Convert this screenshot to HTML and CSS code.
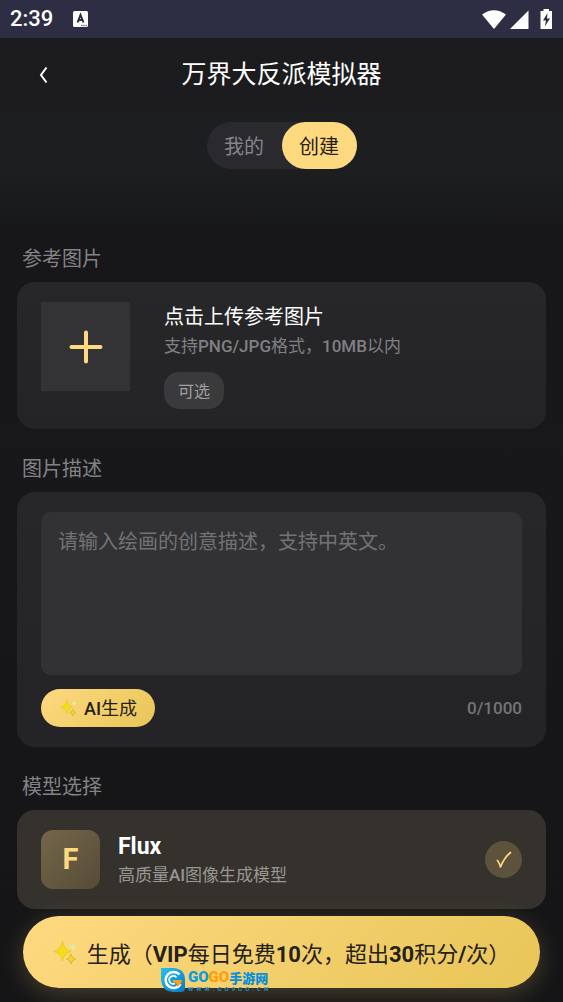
FILE: index.html
```html
<!DOCTYPE html>
<html lang="zh-CN">
<head>
<meta charset="utf-8">
<meta name="viewport" content="width=device-width, initial-scale=1">
<title>万界大反派模拟器</title>
<link rel="stylesheet" href="styles.css">
</head>
<body>
<svg class="symbols" aria-hidden="true">
  <symbol id="sparkles" viewBox="0 0 24 24">
    <path d="M9.500 1Q10.500 9 18 11.500Q10.500 14 9.500 21Q8.500 14 1 11.500Q8.500 9 9.500 1Z" fill="#f4dc16" stroke="#d9b927" stroke-width=".5"/>
    <path d="M18 14Q18.600 18 22.500 19Q18.600 20 18 24Q17.400 20 13.500 19Q17.400 18 18 14Z" fill="#f2d42a" stroke="#cfae2a" stroke-width=".7"/>
    <path d="M20 3.500Q20.500 6 23 6.500Q20.500 7 20 9.500Q19.500 7 17 6.500Q19.500 6 20 3.500Z" fill="#d9efa8" stroke="#d9efa8"/>
  </symbol>
</svg>
<div class="app">
  <div class="status">
    <span class="time">2:39</span>
    <svg class="status-app" viewBox="0 0 15 16" width="15" height="16" aria-hidden="true">
      <rect width="15" height="16" rx="1.500" fill="#fff"/>
      <path d="M4.500 11.500L7.500 4L10.500 11.500M5.700 9H9.300" fill="none" stroke="#2d2d44" stroke-width="2"/>
      <path d="M8 14.500H14" stroke="#777785" stroke-width="1.500" stroke-dasharray="1.500 .7"/>
    </svg>
    <svg class="status-system" viewBox="0 0 71 21" width="71" height="21" aria-hidden="true">
      <g fill="#fff">
        <path d="M0 5.500Q12 -3 24 5.500L12 20Z"/>
        <path d="M28 20L46.500 1.500V20Z"/>
        <path d="M58.500 2H61.500V0H67V2H70V20H58.500Z"/>
      </g>
      <path d="M65.500 4L61 11.500H64L62.700 17.500L68 9.500H65Z" fill="#2d2d44"/>
    </svg>
  </div>
  <header class="header">
    <button class="back" aria-label="返回"><svg viewBox="0 0 10 18" width="10" height="18"><path d="M7.500 1.500L2 9L7.500 16.500" fill="none" stroke="#fff" stroke-width="2"/></svg></button>
    <h1 class="title">万界大反派模拟器</h1>
  </header>
  <nav class="nav">
    <div class="tabs">
      <button class="tab">我的</button>
      <button class="tab tab-active">创建</button>
    </div>
  </nav>
  <main class="content">
    <section>
      <h2 class="label">参考图片</h2>
      <div class="card upload">
        <button class="upload-box" aria-label="上传参考图片"><svg viewBox="0 0 34 34" width="34" height="34"><path d="M17 2.500V31.500M2.500 17H31.500" stroke="#ffd980" stroke-width="4" stroke-linecap="round"/></svg></button>
        <div class="upload-text">
          <h3 class="upload-title">点击上传参考图片</h3>
          <p class="hint">支持<span class="latin">PNG/JPG</span>格式，<span class="latin">10MB</span>以内</p>
          <span class="chip">可选</span>
        </div>
      </div>
    </section>
    <section>
      <h2 class="label"><label for="prompt">图片描述</label></h2>
      <div class="card">
        <textarea class="prompt" id="prompt" maxlength="1000" placeholder="请输入绘画的创意描述，支持中英文。"></textarea>
        <div class="prompt-bar">
          <button class="ai"><svg class="ai-icon"><use href="#sparkles"/></svg><span><span class="latin">AI</span>生成</span></button>
          <span class="count">0/1000</span>
        </div>
      </div>
    </section>
    <section>
      <h2 class="label">模型选择</h2>
      <button class="card model">
        <span class="model-logo">F</span>
        <span class="model-text">
          <span class="model-name">Flux</span>
          <span class="model-hint">高质量<span class="latin">AI</span>图像生成模型</span>
        </span>
        <span class="check"><svg viewBox="0 0 16 18" width="16" height="18"><path d="M1.500 9.500Q3.500 12 4.500 16Q8 7 14.500 1.500" fill="none" stroke="#ffd980" stroke-width="1.700" stroke-linecap="round" stroke-linejoin="round"/></svg></span>
      </button>
    </section>
  </main>
  <footer class="footer">
    <button class="generate"><svg class="generate-icon"><use href="#sparkles"/></svg><span>生成（<b>VIP</b>每日免费<b>10</b>次，超出<b>30</b>积分<b>/</b>次）</span></button>
    <div class="watermark">
      <svg viewBox="0 0 24 24" width="24" height="24" aria-hidden="true">
        <defs><linearGradient id="drop" x1="0" y1="0" x2="1" y2="1"><stop offset="0" stop-color="#27c1ee"/><stop offset="1" stop-color="#0879c9"/></linearGradient></defs>
        <path d="M0 0H13Q24 1 24 12V20Q24 24 20 24H12Q1 23 0 12Z" fill="url(#drop)"/>
        <path d="M18.500 6.500A8 8 0 1 0 19.500 16" fill="none" stroke="#fff" stroke-width="2.500"/>
        <path d="M15.500 9.500A4 4 0 1 0 14 15.500" fill="none" stroke="#e5f8ff" stroke-width="1.800"/>
        <path d="M12 12H21Q20 17 16 19Q17 15 12 14Z" fill="#ff9d13"/>
      </svg>
      <span class="brand">
        <span class="brand-name"><span class="brand-blue">GO</span><span class="brand-orange">GO</span><span class="brand-cn">手游网</span></span>
        <span class="brand-url"><span>W</span><span>W</span><span>W</span><span>.</span><span>G</span><span>O</span><span>9</span><span>G</span><span>O</span><span>.</span><span>C</span><span>N</span></span>
      </span>
    </div>
  </footer>
</div>
</body>
</html>
```
FILE: styles.css
```css
* { box-sizing: border-box; }
body {
  margin: 0;
  background: #141416;
  color: #fff;
  font-family: Roboto, "Noto Sans CJK SC", sans-serif;
}
button {
  margin: 0;
  padding: 0;
  border: 0;
  background: none;
  color: inherit;
  font: inherit;
}
h1, h2, h3, p { margin: 0; font-weight: 400; }
svg { display: block; flex: none; }
.symbols { position: absolute; width: 0; height: 0; }
.latin { font-weight: 500; }
.app {
  display: flex;
  flex-direction: column;
  min-height: 100vh;
  background: linear-gradient(#1c1e1f 0, #1c1e1f 170px, #17171a 235px, #18181b 440px, #151517 100%);
}
.status {
  display: flex;
  align-items: center;
  height: 38px;
  padding: 0 10px;
  background: #2d2d44;
}
.time { font-size: 22px; font-weight: 500; line-height: 40px; }
.status-app { margin-left: 20px; }
.status-system { margin-left: auto; }
.header {
  display: grid;
  grid-template-columns: 54px 1fr 54px;
  align-items: center;
  height: 74px;
  padding: 0 17px;
  background: #1c1c1e;
}
.back {
  display: flex;
  align-items: center;
  justify-content: center;
  height: 48px;
}
.title { font-size: 25px; line-height: 36px; text-align: center; }
.nav { display: flex; justify-content: center; padding-top: 10px; }
.tabs { display: flex; height: 47px; border-radius: 24px; background: #2a292e; }
.tab {
  width: 75px;
  border-radius: 24px;
  color: #85858a;
  font-size: 20px;
}
.tab-active { background: #ffd980; color: #24211a; }
.content {
  display: flex;
  flex-direction: column;
  gap: 28px;
  padding: 78px 17px 0;
}
.label {
  padding-left: 5px;
  margin-bottom: 11px;
  color: #838386;
  font-size: 20px;
  line-height: 24px;
}
.card {
  padding: 20px 24px;
  border-radius: 18px;
  background: linear-gradient(#272729, #242426);
}
.upload { display: flex; align-items: flex-start; gap: 34px; }
.upload-box {
  display: flex;
  align-items: center;
  justify-content: center;
  flex: none;
  width: 89px;
  height: 89px;
  background: #333335;
}
.upload-text { display: flex; flex-direction: column; align-items: flex-start; }
.upload-title { font-size: 20px; line-height: 30px; }
.hint {
  margin: 2px 0 14px;
  color: #808083;
  font-size: 17px;
  line-height: 24px;
}
.chip {
  padding: 2px 14px 0;
  border-radius: 15px;
  background: #3a3a3d;
  color: #a0a0a2;
  font-size: 16px;
  line-height: 35px;
}
.prompt {
  display: block;
  width: 100%;
  height: 163px;
  padding: 15px 17px;
  border: 0;
  border-radius: 10px;
  outline: 0;
  resize: none;
  background: #323234;
  color: #fff;
  font: 20px/30px Roboto, "Noto Sans CJK SC", sans-serif;
}
.prompt::placeholder { color: #727275; opacity: 1; }
.prompt-bar {
  display: flex;
  align-items: center;
  justify-content: space-between;
  margin-top: 14px;
}
.ai {
  display: flex;
  align-items: center;
  gap: 7px;
  height: 38px;
  padding: 0 18px 2px 19px;
  border-radius: 19px;
  background: linear-gradient(135deg, #ffd980, #e8c558);
  color: #24211a;
  font-size: 18px;
}
.ai-icon { width: 17px; height: 17px; }
.count { color: #747477; font-size: 17px; font-weight: 500; }
.model {
  display: flex;
  align-items: center;
  width: 100%;
  background: #35322d;
  text-align: left;
}
.model-logo {
  flex: none;
  width: 59px;
  border-radius: 12px;
  background: linear-gradient(135deg, #74664a, #554c37);
  color: #ffd980;
  font-size: 29px;
  font-weight: 700;
  line-height: 59px;
  text-align: center;
}
.model-text {
  display: flex;
  flex-direction: column;
  flex: 1;
  gap: 2px;
  padding-left: 18px;
}
.model-name { font-size: 23px; font-weight: 700; line-height: 28px; }
.model-hint { color: #989692; font-size: 17px; line-height: 24px; }
.check {
  display: flex;
  align-items: center;
  justify-content: center;
  width: 37px;
  height: 37px;
  border-radius: 50%;
  background: #5d533c;
}
.footer { position: relative; padding: 7px 23px 14px; }
.generate {
  display: flex;
  align-items: center;
  justify-content: center;
  gap: 10px;
  width: 100%;
  height: 72px;
  border-radius: 36px;
  background: linear-gradient(135deg, #ffd980, #e8c558);
  box-shadow: 0 6px 24px #ffd98038;
  color: #24211a;
  font-size: 22px;
  white-space: nowrap;
}
.generate-icon { width: 24px; height: 24px; }
.watermark {
  position: absolute;
  bottom: 10px;
  left: 161px;
  display: flex;
  gap: 3px;
}
.brand { display: flex; flex-direction: column; }
.brand-name {
  display: flex;
  align-items: center;
  height: 18px;
  font-size: 15px;
  font-weight: 900;
}
.brand-blue { color: #079de5; }
.brand-orange { color: #ff9e08; }
.brand-cn { color: #0790dc; font-size: 13px; }
.brand-url {
  display: flex;
  justify-content: space-between;
  color: #1a8ec0;
  font-size: 6px;
  font-weight: 700;
  line-height: 6px;
}
```
